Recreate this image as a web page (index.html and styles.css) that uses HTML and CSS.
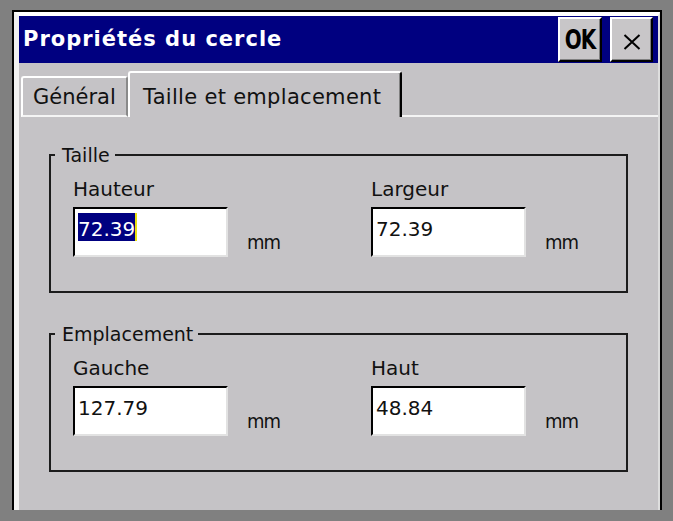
FILE: index.html
```html
<!DOCTYPE html>
<html lang="fr">
<head>
<meta charset="utf-8">
<title>Propriétés du cercle</title>
<link rel="stylesheet" href="styles.css">
</head>
<body>
<div class="window">
  <div class="frame">
    <div class="titlebar">
      <span class="title">Propriétés du cercle</span>
      <div class="tbtn ok"><span>OK</span></div>
      <div class="tbtn close">
        <svg width="18" height="16" viewBox="0 0 18 16"><path d="M1.5 1 L16.5 15 M16.5 1 L1.5 15" stroke="#000" stroke-width="2" fill="none"/></svg>
      </div>
    </div>
    <div class="tabs">
      <div class="tab">Général</div>
      <div class="tab active">Taille et emplacement</div>
      <div class="tab-fill"></div>
    </div>
    <div class="panel">
      <fieldset class="group">
        <legend>Taille</legend>
        <div class="fields">
          <div class="col">
            <div class="label">Hauteur</div>
            <div class="row"><div class="edit"><span class="val sel">72.39</span></div><span class="unit">mm</span></div>
          </div>
          <div class="col">
            <div class="label">Largeur</div>
            <div class="row"><div class="edit"><span class="val">72.39</span></div><span class="unit">mm</span></div>
          </div>
        </div>
      </fieldset>
      <fieldset class="group">
        <legend>Emplacement</legend>
        <div class="fields">
          <div class="col">
            <div class="label">Gauche</div>
            <div class="row"><div class="edit"><span class="val">127.79</span></div><span class="unit">mm</span></div>
          </div>
          <div class="col">
            <div class="label">Haut</div>
            <div class="row"><div class="edit"><span class="val">48.84</span></div><span class="unit">mm</span></div>
          </div>
        </div>
      </fieldset>
    </div>
  </div>
</div>
</body>
</html>
```
FILE: styles.css
```css
html, body {
  margin: 0;
  height: 100%;
}
body {
  background: #808080;
  font-family: "DejaVu Sans", sans-serif;
  color: #111;
  overflow: hidden;
}
.window {
  margin: 10px 0 0 12px;
  width: 650px;
  height: 500px;
  box-sizing: border-box;
  border: 2px solid #000;
  border-bottom: 0;
  background: #c5c3c6;
}
.frame {
  height: 100%;
  box-sizing: border-box;
  border-top: 4px solid #fff;
  border-left: 5px solid #f2f2f2;
  border-right: 2px solid #dedede;
  display: flex;
  flex-direction: column;
}
.titlebar {
  flex: none;
  height: 47px;
  background: #000080;
  display: flex;
  align-items: flex-start;
  padding: 0 5px 0 4px;
}
.title {
  flex: 1;
  color: #fff;
  font-weight: bold;
  font-size: 21px;
  line-height: 47px;
  letter-spacing: 1px;
  white-space: nowrap;
}
.tbtn {
  margin-top: 1px;
  height: 45px;
  box-sizing: border-box;
  background: #c8c6c8;
  border: 2px solid;
  border-color: #fff #000 #000 #fff;
  box-shadow: inset -1px -1px 0 #808080;
  display: flex;
  align-items: center;
  justify-content: center;
}
.ok {
  width: 44px;
  font-weight: bold;
  font-size: 20px;
  color: #000;
}
.ok span {
  display: inline-block;
  transform: scaleY(1.3);
  letter-spacing: -1px;
}
.close {
  width: 43px;
  margin-left: 8px;
}
.close svg {
  display: block;
  margin-top: 5px;
}
.tabs {
  flex: none;
  height: 54px;
  display: flex;
  align-items: flex-end;
}
.tab {
  box-sizing: border-box;
  font-size: 21px;
  line-height: 24px;
  white-space: nowrap;
  border-top: 2px solid #fff;
  border-left: 2px solid #fff;
  border-radius: 3px 3px 0 0;
}
.tab:first-child {
  margin-left: 2px;
  width: 107px;
  height: 41px;
  padding: 7px 0 0 10px;
  border-right: 2px solid #8a8a8a;
  border-bottom: 2px solid #f4f4f4;
}
.tab.active {
  width: 274px;
  height: 46px;
  padding: 12px 0 0 13px;
  letter-spacing: 0.3px;
  border-right: 2px solid #000;
  box-shadow: inset -1px 0 0 #808080;
}
.tab-fill {
  flex: 1;
  align-self: stretch;
  border-bottom: 2px solid #f4f4f4;
}
.panel {
  flex: 1;
  padding-top: 27px;
}
.group {
  margin: 0 30px;
  padding: 12px 0 34px 2px;
  border: 2px solid #1c1c1c;
  min-width: 0;
}
.group + .group {
  margin-top: 30px;
}
.group legend {
  margin-left: 2px;
  padding: 0 5px 0 7px;
  font-size: 19px;
  line-height: 22px;
}
.fields {
  display: grid;
  grid-template-columns: 298px auto;
  padding-left: 20px;
}
.label {
  font-size: 20px;
  line-height: 23px;
}
.row {
  margin-top: 6px;
  display: flex;
  align-items: flex-end;
}
.edit {
  width: 155px;
  height: 50px;
  box-sizing: border-box;
  background: #fff;
  border: 2px solid;
  border-color: #000 #e2e2e2 #e2e2e2 #000;
  padding: 4px 0 0 3px;
}
.val {
  display: inline-block;
  font-size: 20px;
  line-height: 23px;
  padding-top: 5px;
}
.val.sel {
  background: #000080;
  color: #fff;
  border-right: 2px solid #e8e010;
}
.unit {
  font-family: "DejaVu Sans Condensed", "DejaVu Sans", sans-serif;
  font-size: 20px;
  line-height: 23px;
  letter-spacing: -1px;
  margin: 0 0 3px 19px;
}
```
